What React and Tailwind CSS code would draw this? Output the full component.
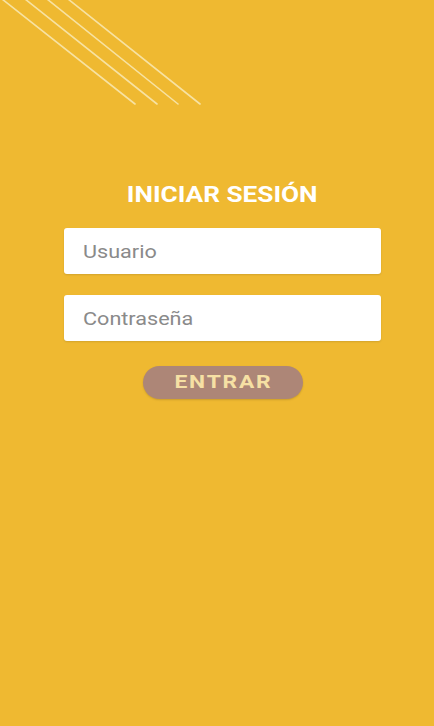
export default function App() {
  return (
    <div
      className="relative w-[434px] h-[726px] overflow-hidden bg-[#EFB931]"
      style={{ fontFamily: 'Roboto, "Liberation Sans", Arial, sans-serif' }}
    >
      {/* Decorative diagonal lines */}
      <svg className="absolute left-0 top-0" width="220" height="120" viewBox="0 0 220 120">
        <g stroke="#F7E2A2" strokeWidth="1.6" strokeLinecap="round">
          <line x1="2" y1="-1" x2="135" y2="104" />
          <line x1="25" y1="-1" x2="157" y2="104" />
          <line x1="47" y1="-1" x2="178" y2="104" />
          <line x1="68" y1="-1" x2="200" y2="104" />
        </g>
      </svg>

      <div className="flex flex-col items-center pt-[181px] pl-[64px] w-[381px]">
        <h1 className="text-white font-bold text-[22px] leading-[28px] scale-x-[1.19]">
          INICIAR SESIÓN
        </h1>

        <div className="flex flex-col gap-[21px] mt-[19px] w-[317px]">
          <div className="h-[46px] bg-white rounded-[3px] shadow-[0_1px_2px_rgba(0,0,0,0.12)] flex items-center px-[19px]">
            <span className="text-[#8a8a8a] text-[18px] scale-x-[1.2] origin-left">Usuario</span>
          </div>
          <div className="h-[46px] bg-white rounded-[3px] shadow-[0_1px_2px_rgba(0,0,0,0.12)] flex items-center px-[19px]">
            <span className="text-[#8a8a8a] text-[18px] scale-x-[1.2] origin-left">Contraseña</span>
          </div>
        </div>

        <button className="mt-[25px] w-[160px] h-[33px] rounded-full bg-[#AD8677] shadow-[0_1px_2px_rgba(0,0,0,0.15)] flex items-center justify-center">
          <span className="text-[#F6E0A4] font-bold text-[19px] tracking-[1.5px] pl-[1.5px] scale-x-[1.2]">ENTRAR</span>
        </button>
      </div>
    </div>
  )
}
